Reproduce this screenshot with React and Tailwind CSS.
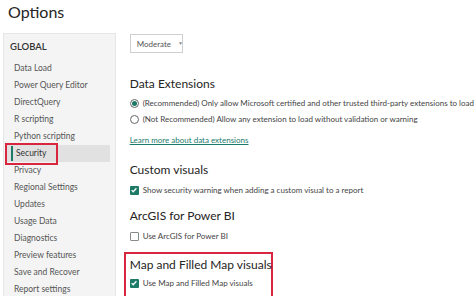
const navItems = [
  'Data Load',
  'Power Query Editor',
  'DirectQuery',
  'R scripting',
  'Python scripting',
  'Security',
  'Privacy',
  'Regional Settings',
  'Updates',
  'Usage Data',
  'Diagnostics',
  'Preview features',
  'Save and Recover',
  'Report settings',
];

function Check({ checked }) {
  return checked ? (
    <span className="flex h-[9px] w-[9px] shrink-0 items-center justify-center rounded-[1px] bg-[#1d7a67]">
      <svg viewBox="0 0 10 10" className="h-[8px] w-[8px]" fill="none" stroke="white" strokeWidth="1.6">
        <path d="M2 5.2l2 2 4-4.4" />
      </svg>
    </span>
  ) : (
    <span className="h-[9px] w-[9px] shrink-0 rounded-[1px] border border-[#8a8a8a] bg-white" />
  );
}

function Radio({ checked }) {
  return (
    <span className="flex h-[9px] w-[9px] shrink-0 items-center justify-center rounded-full border border-[#666]">
      {checked && <span className="h-[5px] w-[5px] rounded-full bg-[#1d7a67]" />}
    </span>
  );
}

function Heading({ children }) {
  return <h2 className="text-[12px] leading-[16px] whitespace-nowrap text-[#252423]">{children}</h2>;
}

export default function App() {
  return (
    <div
      className="flex h-[296px] w-[474px] flex-col overflow-hidden bg-white text-[#333]"
      style={{ fontFamily: 'Lato, "Open Sans", sans-serif' }}
    >
      <h1 className="px-[8px] pt-[1px] text-[16px] leading-[22px] text-[#252423]">Options</h1>

      <div className="mt-[10px] flex flex-1">
        <aside className="ml-[3px] w-[113px] border border-[#e6e6e6] bg-[#f4f4f4] pt-[5px]">
          <p className="px-[6px] text-[9.5px] leading-[16px] font-semibold text-[#333]">GLOBAL</p>
          <ul className="mt-[5px]">
            {navItems.map((item) =>
              item === 'Security' ? (
                <li key={item} className="relative mr-[5px] ml-[2px] flex h-[17px] items-center bg-[#e1e1e1]">
                  <span className="ml-[5px] h-[15px] w-[2px] bg-[#1d7a67]" />
                  <span className="ml-[3px] text-[8.5px] text-[#333]">{item}</span>
                  <span className="absolute -top-[2px] -bottom-[3px] -left-[1px] w-[53px] border-2 border-[#d7263d]" />
                </li>
              ) : (
                <li key={item} className="flex h-[17px] items-center pl-[10px] text-[8.5px] text-[#555]">
                  {item}
                </li>
              )
            )}
          </ul>
        </aside>

        <main className="flex-1 pl-[14px]">
          <div className="mt-[1px] flex h-[19px] w-[53px] items-center gap-[7px] border border-[#cfcfcf] pl-[6px] text-[8px] text-[#555]">
            Moderate
            <span className="text-[5px] text-[#888]">▼</span>
          </div>

          <section className="mt-[23px]">
            <Heading>Data Extensions</Heading>
            <div className="mt-[5px] flex flex-col gap-[4px] text-[8px] whitespace-nowrap text-[#444]">
              <label className="flex h-[12px] items-center gap-[4px]">
                <Radio checked />
                (Recommended) Only allow Microsoft certified and other trusted third-party extensions to load
              </label>
              <label className="flex h-[12px] items-center gap-[4px]">
                <Radio />
                (Not Recommended) Allow any extension to load without validation or warning
              </label>
            </div>
            <a className="mt-[9px] block text-[8px] leading-[12px] text-[#1a7a6e] underline">
              Learn more about data extensions
            </a>
          </section>

          <section className="mt-[16px]">
            <Heading>Custom visuals</Heading>
            <label className="mt-[6px] flex h-[12px] items-center gap-[4px] text-[8px] text-[#444]">
              <Check checked />
              Show security warning when adding a custom visual to a report
            </label>
          </section>

          <section className="mt-[12px]">
            <Heading>ArcGIS for Power BI</Heading>
            <label className="mt-[6px] flex h-[12px] items-center gap-[4px] text-[8px] text-[#444]">
              <Check />
              Use ArcGIS for Power BI
            </label>
          </section>

          <section className="-ml-[6px] mt-[10px] w-[149px] border-2 border-[#d7263d] px-[4px] pt-[3px] pb-[7px]">
            <Heading>Map and Filled Map visuals</Heading>
            <label className="mt-[4px] flex h-[12px] items-center gap-[4px] text-[8px] text-[#444]">
              <Check checked />
              Use Map and Filled Map visuals
            </label>
          </section>
        </main>
      </div>
    </div>
  );
}
